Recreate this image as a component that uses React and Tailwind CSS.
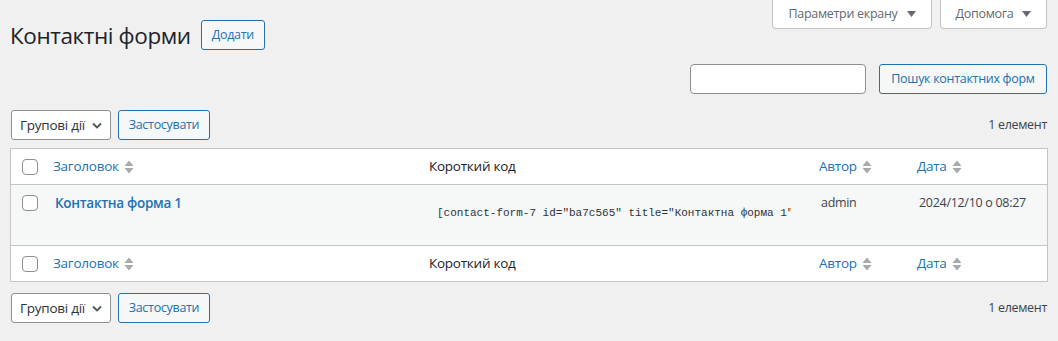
import React from "react";

function SortIcon() {
  return (
    <svg width="10" height="18" viewBox="0 0 10 18" className="ml-[5px] inline-block shrink-0">
      <path d="M0.5 8 L5 2.5 L9.5 8 Z" fill="#a7aaad" />
      <path d="M0.5 10 L5 15.5 L9.5 10 Z" fill="#a7aaad" />
    </svg>
  );
}

function Checkbox() {
  return <span className="block h-[16px] w-[16px] rounded-[4px] border border-[#8c8f94] bg-white" />;
}

function Tab({ label, w }) {
  return (
    <div className={"flex h-[29px] items-center justify-center gap-[9px] rounded-b-[4px] border border-t-0 border-[#c3c4c7] bg-white text-[12.5px] text-[#646970] " + w}>
      <span>{label}</span>
      <svg width="9" height="6" viewBox="0 0 9 6"><path d="M0 0 L9 0 L4.5 6 Z" fill="#646970" /></svg>
    </div>
  );
}

function Btn({ children, className = "" }) {
  return (
    <div className={"flex h-[30px] items-center justify-center rounded-[3px] border border-[#2271b1] bg-[#f6f7f7] text-[12.5px] text-[#2271b1] " + className}>
      {children}
    </div>
  );
}

function TableNav() {
  return (
    <div className="flex h-[30px] items-center pl-[11px] pr-[11px]">
      <div className="flex h-[30px] w-[100px] items-center justify-between rounded-[3px] border border-[#8c8f94] bg-white pl-[8px] pr-[7px] text-[13.5px] tracking-[-0.25px] text-[#2c3338]">
        <span>Групові дії</span>
        <svg width="12" height="12" viewBox="0 0 12 12"><path d="M2 4.5 L6 8.5 L10 4.5" fill="none" stroke="#50575e" strokeWidth="1.8" /></svg>
      </div>
      <Btn className="ml-[7px] w-[92px]">Застосувати</Btn>
      <div className="ml-auto text-[12.5px] text-[#3c434a]">1 елемент</div>
    </div>
  );
}

function HeadRow({ top }) {
  return (
    <div className={"flex h-[36px] items-center bg-white text-[13.5px] tracking-[-0.25px] " + (top ? "border-b border-[#c3c4c7]" : "border-t border-[#c3c4c7]")}>
      <div className="w-[33px]"><div className="ml-[11px]"><Checkbox /></div></div>
      <div className="flex w-[376px] items-center pl-[9px] text-[#2271b1]">Заголовок<SortIcon /></div>
      <div className="w-[390px] pl-[9px] text-[#1d2327]">Короткий код</div>
      <div className="flex w-[98px] items-center pl-[9px] text-[#2271b1]">Автор<SortIcon /></div>
      <div className="flex items-center pl-[9px] text-[#2271b1]">Дата<SortIcon /></div>
    </div>
  );
}

export default function App() {
  return (
    <div className="min-h-[341px] w-full bg-[#f0f0f1] font-['Open_Sans',sans-serif] text-[12.5px] tracking-[-0.3px] text-[#3c434a]">
      <div className="flex justify-end gap-[8px] pr-[11px]">
        <Tab label="Параметри екрану" w="w-[160px]" />
        <Tab label="Допомога" w="w-[107px]" />
      </div>
      <div className="-mt-[9px] flex h-[30px] items-center pl-[10px]">
        <h1 className="text-[22.5px] font-normal leading-[29px] tracking-[-0.4px] text-[#1d2327]">Контактні форми</h1>
        <Btn className="ml-[10px] w-[64px]">Додати</Btn>
      </div>
      <div className="mt-[14px] flex h-[30px] items-center justify-end pr-[11px]">
        <div className="h-[30px] w-[176px] rounded-[4px] border border-[#8c8f94] bg-white" />
        <Btn className="ml-[13px] w-[168px]">Пошук контактних форм</Btn>
      </div>
      <div className="mt-[16px]">
        <TableNav />
      </div>
      <div className="mx-[10px] mt-[8px] w-[1038px] border border-[#c3c4c7]">
        <HeadRow top />
        <div className="flex h-[60px] items-start bg-[#f6f7f7]">
          <div className="w-[33px] pt-[10px]"><div className="ml-[11px]"><Checkbox /></div></div>
          <div className="w-[376px] pl-[11px] pt-[8px] text-[13.5px] font-semibold tracking-[-0.3px] text-[#2271b1]">Контактна форма 1</div>
          <div className="w-[390px] pl-[17px] pt-[20px]">
            <div className="w-[354px] overflow-hidden whitespace-nowrap font-['Liberation_Mono',monospace] text-[11px] tracking-normal text-[#2c3338]">[contact-form-7 id="ba7c565" title="Контактна форма 1"]</div>
          </div>
          <div className="w-[98px] pl-[11px] pt-[9px] text-[#3c434a]">admin</div>
          <div className="pl-[11px] pt-[9px] text-[#3c434a]">2024/12/10 о 08:27</div>
        </div>
        <HeadRow />
      </div>
      <div className="mt-[11px]">
        <TableNav />
      </div>
    </div>
  );
}
